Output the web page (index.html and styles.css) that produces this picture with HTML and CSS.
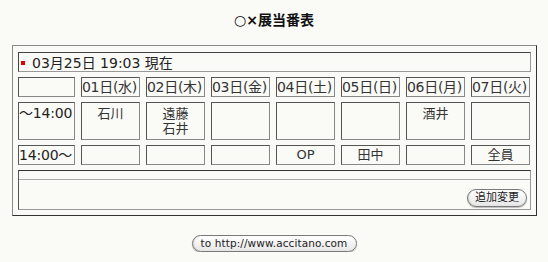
FILE: index.html
```html
<!DOCTYPE html>
<html lang="ja">
<head>
<meta charset="utf-8">
<title>○×展当番表</title>
<link rel="stylesheet" href="styles.css">
</head>
<body>
<h1 class="title">○×展当番表</h1>
<div class="board">
  <div class="now"><span class="mark"></span>03月25日 19:03 現在</div>
  <div class="grid">
    <div class="cell"></div>
    <div class="cell day">01日(水)</div>
    <div class="cell day">02日(木)</div>
    <div class="cell day">03日(金)</div>
    <div class="cell day">04日(土)</div>
    <div class="cell day">05日(日)</div>
    <div class="cell day">06日(月)</div>
    <div class="cell day">07日(火)</div>

    <div class="cell time early">〜14:00</div>
    <div class="cell name">石川</div>
    <div class="cell name">遠藤<br>石井</div>
    <div class="cell name"></div>
    <div class="cell name"></div>
    <div class="cell name"></div>
    <div class="cell name">酒井</div>
    <div class="cell name"></div>

    <div class="cell time late">14:00〜</div>
    <div class="cell name short"></div>
    <div class="cell name short"></div>
    <div class="cell name short"></div>
    <div class="cell name short">OP</div>
    <div class="cell name short">田中</div>
    <div class="cell name short"></div>
    <div class="cell name short">全員</div>
  </div>
  <div class="memo">
    <div class="memo-top"></div>
    <div class="memo-actions"><span class="pill">追加変更</span></div>
  </div>
</div>
<div class="footer"><span class="pill link">to http://www.accitano.com</span></div>
</body>
</html>
```

FILE: styles.css
```css
html, body {
  margin: 0;
  padding: 0;
  background: #fafaf7;
}
body {
  font-family: "DejaVu Sans", "Noto Sans CJK JP", sans-serif;
  color: #222;
  width: 548px;
}
.title {
  margin: 10px 0 0 0;
  height: 20px;
  line-height: 20px;
  font-size: 14px;
  font-weight: bold;
  text-align: center;
  color: #111;
}
.board {
  margin: 15px 0 0 12px;
  width: 525px;
  box-sizing: border-box;
  border: 1px solid;
  border-color: #8a8a8a #333 #333 #8a8a8a;
  padding: 6px 5px 5px 5px;
}
.now {
  box-sizing: border-box;
  height: 20px;
  border: 1px solid;
  border-color: #444 #999 #999 #444;
  display: flex;
  align-items: center;
  padding-left: 2px;
  font-size: 14px;
  color: #222;
}
.mark {
  width: 4px;
  height: 4px;
  background: #e00000;
  margin-right: 7px;
  margin-top: 1px;
}
.grid {
  margin-top: 5px;
  display: grid;
  grid-template-columns: 57px repeat(7, 59px);
  grid-template-rows: 20px 38px 20px;
  column-gap: 6px;
  row-gap: 5px;
}
.cell {
  box-sizing: border-box;
  border: 1px solid;
  border-color: #555 #888 #888 #555;
  overflow: hidden;
  white-space: nowrap;
}
.day {
  font-size: 14px;
  line-height: 18px;
  color: #333;
  letter-spacing: -0.3px;
}
.time {
  font-size: 14px;
  color: #222;
  letter-spacing: -0.2px;
}
.early {
  line-height: 18px;
  padding-top: 1px;
}
.late {
  line-height: 18px;
}
.name {
  font-size: 13px;
  line-height: 15px;
  text-align: center;
  padding-top: 3px;
  color: #333;
}
.short {
  padding-top: 1px;
  line-height: 16px;
}
.memo {
  margin-top: 5px;
  box-sizing: border-box;
  height: 40px;
  border: 1px solid;
  border-color: #333 #999 #999 #555;
  display: flex;
  flex-direction: column;
}
.memo-top {
  height: 8px;
  border-bottom: 1px solid #aaa;
}
.memo-actions {
  flex: 1;
  display: flex;
  justify-content: flex-end;
  align-items: flex-end;
  padding: 0 3px 2px 0;
}
.pill {
  box-sizing: border-box;
  display: inline-block;
  height: 18px;
  line-height: 16px;
  padding: 0 7px;
  border: 1px solid #7a7a7a;
  border-radius: 9px;
  background: linear-gradient(#ffffff, #f1f1f1 60%, #e6e6e6);
  box-shadow: 0 1px 1px rgba(0,0,0,0.25), inset 1px 0 1px rgba(0,0,0,0.15);
  font-size: 11px;
  color: #222;
  white-space: nowrap;
}
.footer {
  margin-top: 16px;
  text-align: center;
}
.link {
  width: 165px;
  height: 17px;
  line-height: 15px;
  padding: 0;
  text-align: center;
  font-size: 10.5px;
  letter-spacing: 0.1px;
}
```
